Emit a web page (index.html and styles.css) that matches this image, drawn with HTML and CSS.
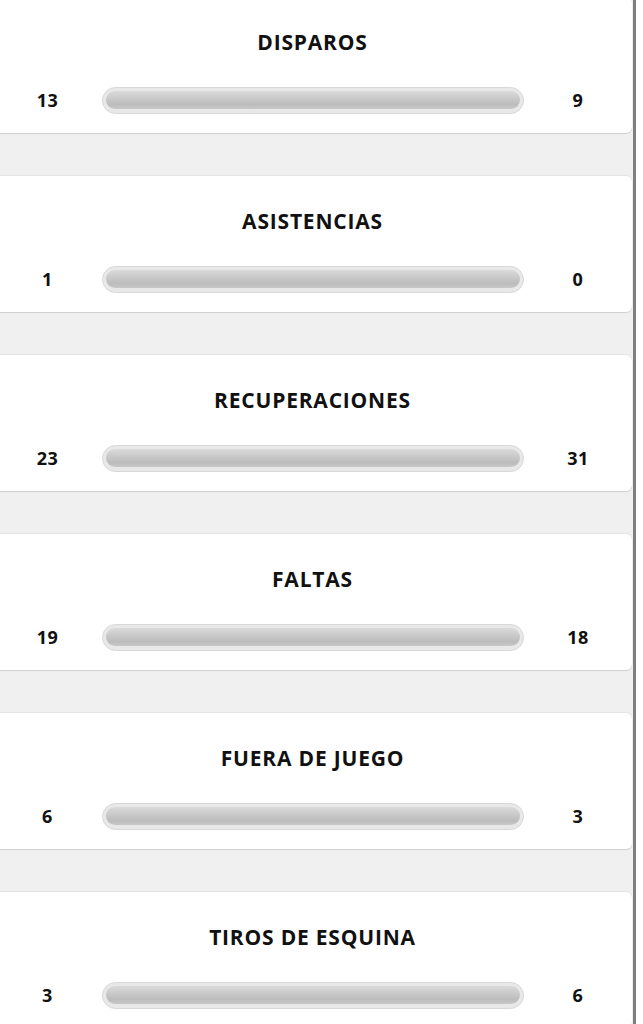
FILE: index.html
```html
<!DOCTYPE html>
<html lang="es">
<head>
<meta charset="utf-8">
<title>Estadísticas</title>
<link rel="stylesheet" href="styles.css">
</head>
<body>
<div class="page">
  <div class="card">
    <div class="title">DISPAROS</div>
    <div class="row"><span class="num">13</span><div class="track"><div class="fill"></div></div><span class="num">9</span></div>
  </div>
  <div class="card">
    <div class="title">ASISTENCIAS</div>
    <div class="row"><span class="num">1</span><div class="track"><div class="fill"></div></div><span class="num">0</span></div>
  </div>
  <div class="card">
    <div class="title">RECUPERACIONES</div>
    <div class="row"><span class="num">23</span><div class="track"><div class="fill"></div></div><span class="num">31</span></div>
  </div>
  <div class="card">
    <div class="title">FALTAS</div>
    <div class="row"><span class="num">19</span><div class="track"><div class="fill"></div></div><span class="num">18</span></div>
  </div>
  <div class="card">
    <div class="title">FUERA DE JUEGO</div>
    <div class="row"><span class="num">6</span><div class="track"><div class="fill"></div></div><span class="num">3</span></div>
  </div>
  <div class="card">
    <div class="title">TIROS DE ESQUINA</div>
    <div class="row"><span class="num">3</span><div class="track"><div class="fill"></div></div><span class="num">6</span></div>
  </div>
</div>
</body>
</html>
```
FILE: styles.css
```css
html, body {
  margin: 0;
  padding: 0;
  background: #ffffff;
  overflow: hidden;
}
body {
  font-family: "Open Sans", "DejaVu Sans", sans-serif;
  color: #111111;
}
.page {
  width: 633px;
  height: 1030px;
  overflow: hidden;
  background: #f0f0f0;
  border-right: 3px solid #7f7f7f;
  display: flex;
  flex-direction: column;
  gap: 43px;
  margin-top: -3px;
}
.card {
  flex: none;
  margin-left: -7px;
  margin-right: 1px;
  height: 136px;
  box-sizing: border-box;
  background: #ffffff;
  border-radius: 6px;
  box-shadow: 0 1px 1px rgba(0,0,0,0.14), 0 -1px 1px rgba(0,0,0,0.05);
  padding-top: 31px;
}
.title {
  text-align: center;
  font-size: 21px;
  font-weight: 700;
  line-height: 28px;
  letter-spacing: 0.8px;
}
.row {
  margin-top: 31px;
  display: grid;
  grid-template-columns: 109px 1fr 108px;
  align-items: center;
}
.num {
  text-align: center;
  font-size: 18px;
  font-weight: 700;
  line-height: 27px;
  letter-spacing: 0.5px;
}
.track {
  height: 27px;
  box-sizing: border-box;
  border-radius: 14px;
  background: #e8e8e8;
  border: 1px solid #d8d8d8;
  padding: 3px 3px 4px 3px;
}
.fill {
  height: 100%;
  border-radius: 10px;
  background: linear-gradient(to bottom, #dadada 0%, #cccccc 35%, #bcbcbc 75%, #c8c8c8 100%);
}
```
